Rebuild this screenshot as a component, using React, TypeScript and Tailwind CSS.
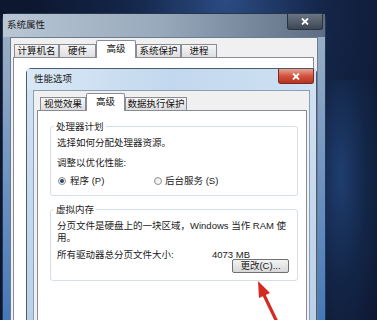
import React from "react";

function OuterTab({ label, w, selected }: { label: string; w: string; selected?: boolean }) {
  if (selected) {
    return (
      <div
        className={`${w} relative z-10 -mb-px flex h-[18px] items-start justify-center rounded-t-[2px] border border-b-0 border-[#898c95] bg-white pt-[2px] text-[9.5px] leading-[12px] text-[#111]`}
      >
        {label}
      </div>
    );
  }
  return (
    <div
      className={`${w} flex h-[13px] items-center justify-center border border-b-0 border-[#898c95] bg-gradient-to-b from-[#f6f6f6] to-[#dedede] text-[9.5px] leading-[12px] text-[#111]`}
    >
      {label}
    </div>
  );
}

function Radio({ checked }: { checked?: boolean }) {
  return (
    <span className="flex h-[8px] w-[8px] items-center justify-center rounded-full border border-[#8e8f8f] bg-gradient-to-br from-[#e6e6e6] to-[#ffffff]">
      {checked ? <span className="h-[4px] w-[4px] rounded-full bg-[#2b4a6b]" /> : null}
    </span>
  );
}

function CloseX({ size = 8 }: { size?: number }) {
  return (
    <svg width={size} height={size - 1} viewBox="0 0 8 7">
      <path d="M1 0.5 L7 6.5 M7 0.5 L1 6.5" stroke="#ffffff" strokeWidth="1.8" />
    </svg>
  );
}

export default function App() {
  return (
    <div className="relative h-[320px] w-[377px] overflow-hidden bg-[#0e1730] font-['Liberation_Sans','Noto_Sans_CJK_SC',sans-serif]">
      {/* desktop */}
      <div className="absolute inset-0 bg-[radial-gradient(ellipse_at_60%_0%,#2b4c82_0%,#14264a_30%,rgba(14,23,48,0)_60%)]" />
      <div className="absolute right-0 top-[80px] h-[240px] w-[60px] bg-[radial-gradient(ellipse_at_40%_40%,#1f3e70_0%,#132648_50%,#0e1730_100%)]" />

      {/* outer window: 系统属性 */}
      <div className="absolute left-[2px] top-[13px] flex h-[330px] w-[324px] flex-col rounded-t-[6px] border border-[#27364b] bg-gradient-to-b from-[#9fb2c6] via-[#6f93c2] to-[#3e74b8]">
        <div className="flex h-[23px] items-center bg-gradient-to-r from-[#b9c7d5] via-[#97a8bb] to-[#5d6d83] pl-[4px] text-[9.5px] text-[#1a1a1a]">
          系统属性
        </div>
        <div className="absolute right-[2px] top-0 flex h-[16px] w-[36px] items-center justify-center rounded-b-[3px] border border-t-0 border-[#2a3340] bg-gradient-to-b from-[#6b7684] to-[#3d4654]">
          <CloseX />
        </div>
        <div className="mx-[7px] flex flex-1 flex-col border border-[#6c7c90] bg-[#f0f0f0] pl-[2px] pr-[3px] pt-[2px]">
          <div className="flex items-end pl-px">
            <OuterTab label="计算机名" w="w-[45px]" />
            <OuterTab label="硬件" w="w-[37px]" />
            <OuterTab label="高级" w="w-[40px]" selected />
            <OuterTab label="系统保护" w="w-[45px]" />
            <OuterTab label="进程" w="w-[36px]" />
          </div>
          <div className="flex-1 border border-[#898c95] bg-white" />
        </div>
      </div>

      {/* inner window: 性能选项 */}
      <div className="absolute left-[26px] top-[68px] flex h-[270px] w-[291px] flex-col rounded-t-[5px] border border-[#4d5b6b] bg-gradient-to-b from-[#d3e3f3] to-[#b7cfe8]">
        <div className="flex h-[21px] items-center bg-gradient-to-r from-[#d9e8f6] via-[#c2d8ee] to-[#cfe1f3] pl-[7px] text-[9.5px] text-[#1a1a1a]">
          性能选项
        </div>
        <div className="absolute right-[2px] top-0 flex h-[15px] w-[36px] items-center justify-center rounded-b-[3px] border border-t-0 border-[#7a2a20] bg-gradient-to-b from-[#e7a293] via-[#d2533f] to-[#b8321f]">
          <CloseX />
        </div>
        <div className="mx-[6px] flex flex-1 flex-col border border-[#8aa0b8] bg-[#f0f0f0] pl-[3px] pr-[2px] pt-[2px]">
          <div className="flex items-end pl-[3px]">
            <OuterTab label="视觉效果" w="w-[46px]" />
            <OuterTab label="高级" w="w-[39px]" selected />
            <OuterTab label="数据执行保护" w="w-[62px]" />
          </div>
          <div className="flex flex-1 flex-col border border-[#898c95] bg-white pl-[12px] pr-[8px] pt-[9px] text-[9.5px] text-[#1a1a1a]">
            <fieldset className="rounded-[3px] border border-[#d5dfe5] pb-[8px] pl-[6px]">
              <legend className="ml-[-3px] px-[2px] leading-[13px]">处理器计划</legend>
              <div className="pt-[3px] leading-[13px]">选择如何分配处理器资源。</div>
              <div className="mt-[7px] leading-[13px]">调整以优化性能:</div>
              <div className="mt-[5px] flex items-center leading-[13px]">
                <div className="flex w-[97px] items-center gap-[4px] pl-px">
                  <Radio checked />
                  <span>程序 (P)</span>
                </div>
                <div className="flex items-center gap-[3px]">
                  <Radio />
                  <span>后台服务 (S)</span>
                </div>
              </div>
            </fieldset>
            <fieldset className="mt-[7px] rounded-[3px] border border-[#d5dfe5] pb-[7px] pl-[6px] pr-[8px]">
              <legend className="ml-[-3px] px-[2px] leading-[13px]">虚拟内存</legend>
              <div className="whitespace-nowrap pt-[4px] leading-[12px]">
                分页文件是硬盘上的一块区域，Windows 当作 RAM 使
              </div>
              <div className="leading-[12px]">用。</div>
              <div className="mt-[4px] grid grid-cols-[155px_auto] leading-[13px]">
                <span>所有驱动器总分页文件大小:</span>
                <span>4073 MB</span>
              </div>
              <div className="mt-[-2px] flex justify-end">
                <div className="flex h-[14px] w-[57px] items-center justify-center rounded-[2px] border border-[#707070] bg-gradient-to-b from-[#f4f4f4] to-[#d8d8d8] leading-[12px]">
                  更改(C)...
                </div>
              </div>
            </fieldset>
          </div>
        </div>
      </div>

      {/* red arrow */}
      <svg className="absolute left-0 top-0" width="377" height="320" viewBox="0 0 377 320">
        <path d="M264 295 L277 322" stroke="#d42a22" strokeWidth="3.2" strokeLinecap="round" />
        <polygon points="258,281 270,293 259,298" fill="#d42a22" />
      </svg>
    </div>
  );
}
